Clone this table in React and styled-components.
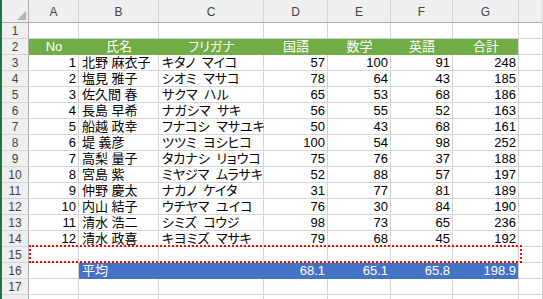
import styled, { createGlobalStyle } from "styled-components";

const GlobalStyle = createGlobalStyle`
  html, body { margin:0; padding:0; background:#fff; overflow:hidden; }
`;

const GREEN = "#70ad47";
const BLUE = "#4472c4";
const GRID = "#d4d4d4";

const Window = styled.div`
  display:flex;
  height:299px;
  border-left:2px solid #217346;
  font-family:"Liberation Sans","Noto Sans CJK JP",sans-serif;
`;

const Sheet = styled.div`
  flex:1;
  display:grid;
  grid-template-columns:27px 50px 80px 105px 64px 63px 62px 66px 1fr;
  grid-template-rows:23px;
  grid-auto-rows:16px;
  align-content:start;
`;

const Corner = styled.div`
  background:#efefef;
  border-right:1px solid #ababab;
  border-bottom:1px solid #ababab;
  display:flex;
  align-items:flex-end;
  justify-content:flex-end;
  padding:0 2px 2px 0;
`;

const ColHead = styled.div`
  background:#efefef;
  border-right:1px solid #d5d5d5;
  border-bottom:1px solid #ababab;
  color:#444;
  font-size:12px;
  display:flex;
  align-items:flex-end;
  justify-content:center;
  padding-bottom:3px;
`;

const RowHead = styled.div`
  background:#efefef;
  border-right:1px solid #ababab;
  border-bottom:1px solid #d5d5d5;
  color:#444;
  font-size:12px;
  display:flex;
  align-items:center;
  justify-content:center;
`;

const Cell = styled.div`
  background:${p => p.$fill || "#fff"};
  color:${p => (p.$fill ? "#fff" : "#000")};
  border-right:1px solid ${p => (p.$fill && !p.$edge ? p.$fill : GRID)};
  border-bottom:1px solid ${p => p.$fill || GRID};
  text-align:${p => p.$align || "left"};
  padding:0 2px 0 3px;
  font-size:13px;
  line-height:15px;
  white-space:nowrap;
  font-feature-settings:"palt";
`;

const AnchorCell = styled(Cell)`
  position:relative;
`;

const Marquee = styled.div`
  position:absolute;
  z-index:2;
  top:-2px;
  left:0;
  width:493px;
  height:18px;
  box-sizing:border-box;
  border:2px dotted #ff0000;
  pointer-events:none;
`;

// furigana: family / given name separated by an en space
const students = [
  [1, "北野 麻衣子", ["キタノ", "マイコ"], 57, 100, 91, 248],
  [2, "塩見 雅子", ["シオミ", "マサコ"], 78, 64, 43, 185],
  [3, "佐久間 春", ["サクマ", "ハル"], 65, 53, 68, 186],
  [4, "長島 早希", ["ナガシマ", "サキ"], 56, 55, 52, 163],
  [5, "船越 政幸", ["フナコシ", "マサユキ"], 50, 43, 68, 161],
  [6, "堤 義彦", ["ツツミ", "ヨシヒコ"], 100, 54, 98, 252],
  [7, "高梨 量子", ["タカナシ", "リョウコ"], 75, 76, 37, 188],
  [8, "宮島 紫", ["ミヤジマ", "ムラサキ"], 52, 88, 57, 197],
  [9, "仲野 慶太", ["ナカノ", "ケイタ"], 31, 77, 81, 189],
  [10, "内山 結子", ["ウチヤマ", "ユイコ"], 76, 30, 84, 190],
  [11, "清水 浩二", ["シミズ", "コウジ"], 98, 73, 65, 236],
  [12, "清水 政喜", ["キヨミズ", "マサキ"], 79, 68, 45, 192],
];

const headers = ["No", "氏名", "フリガナ", "国語", "数学", "英語", "合計"];
const letters = ["A", "B", "C", "D", "E", "F", "G", ""];

function Row({ n, children }) {
  return (
    <>
      <RowHead>{n}</RowHead>
      {children}
    </>
  );
}

function EmptyCells({ count }) {
  return Array.from({ length: count }, (_, i) => <Cell key={i} />);
}

export default function App() {
  return (
    <Window>
      <GlobalStyle />
      <Sheet>
        <Corner>
          <svg width="9" height="9" viewBox="0 0 9 9">
            <polygon points="9,0 9,9 0,9" fill="#b4b4b4" />
          </svg>
        </Corner>
        {letters.map((l, i) => (
          <ColHead key={i}>{l}</ColHead>
        ))}

        <Row n={1}>
          <EmptyCells count={8} />
        </Row>

        <Row n={2}>
          {headers.map((h, i) => (
            <Cell key={i} $fill={GREEN} $align="center" $edge={i === 6}>
              {h}
            </Cell>
          ))}
          <Cell />
        </Row>

        {students.map((s, r) => (
          <Row key={r} n={r + 3}>
            <Cell $align="right">{s[0]}</Cell>
            <Cell>{s[1]}</Cell>
            <Cell>{s[2].join("\u2002")}</Cell>
            <Cell $align="right">{s[3]}</Cell>
            <Cell $align="right">{s[4]}</Cell>
            <Cell $align="right">{s[5]}</Cell>
            <Cell $align="right">{s[6]}</Cell>
            <Cell />
          </Row>
        ))}

        <Row n={15}>
          <AnchorCell>
            <Marquee />
          </AnchorCell>
          <EmptyCells count={7} />
        </Row>

        <Row n={16}>
          <Cell />
          <Cell $fill={BLUE}>平均</Cell>
          <Cell $fill={BLUE} />
          <Cell $fill={BLUE} $align="right">68.1</Cell>
          <Cell $fill={BLUE} $align="right">65.1</Cell>
          <Cell $fill={BLUE} $align="right">65.8</Cell>
          <Cell $fill={BLUE} $align="right" $edge>198.9</Cell>
          <Cell />
        </Row>

        <Row n={17}>
          <EmptyCells count={8} />
        </Row>
        <Row n="">
          <EmptyCells count={8} />
        </Row>
      </Sheet>
    </Window>
  );
}
